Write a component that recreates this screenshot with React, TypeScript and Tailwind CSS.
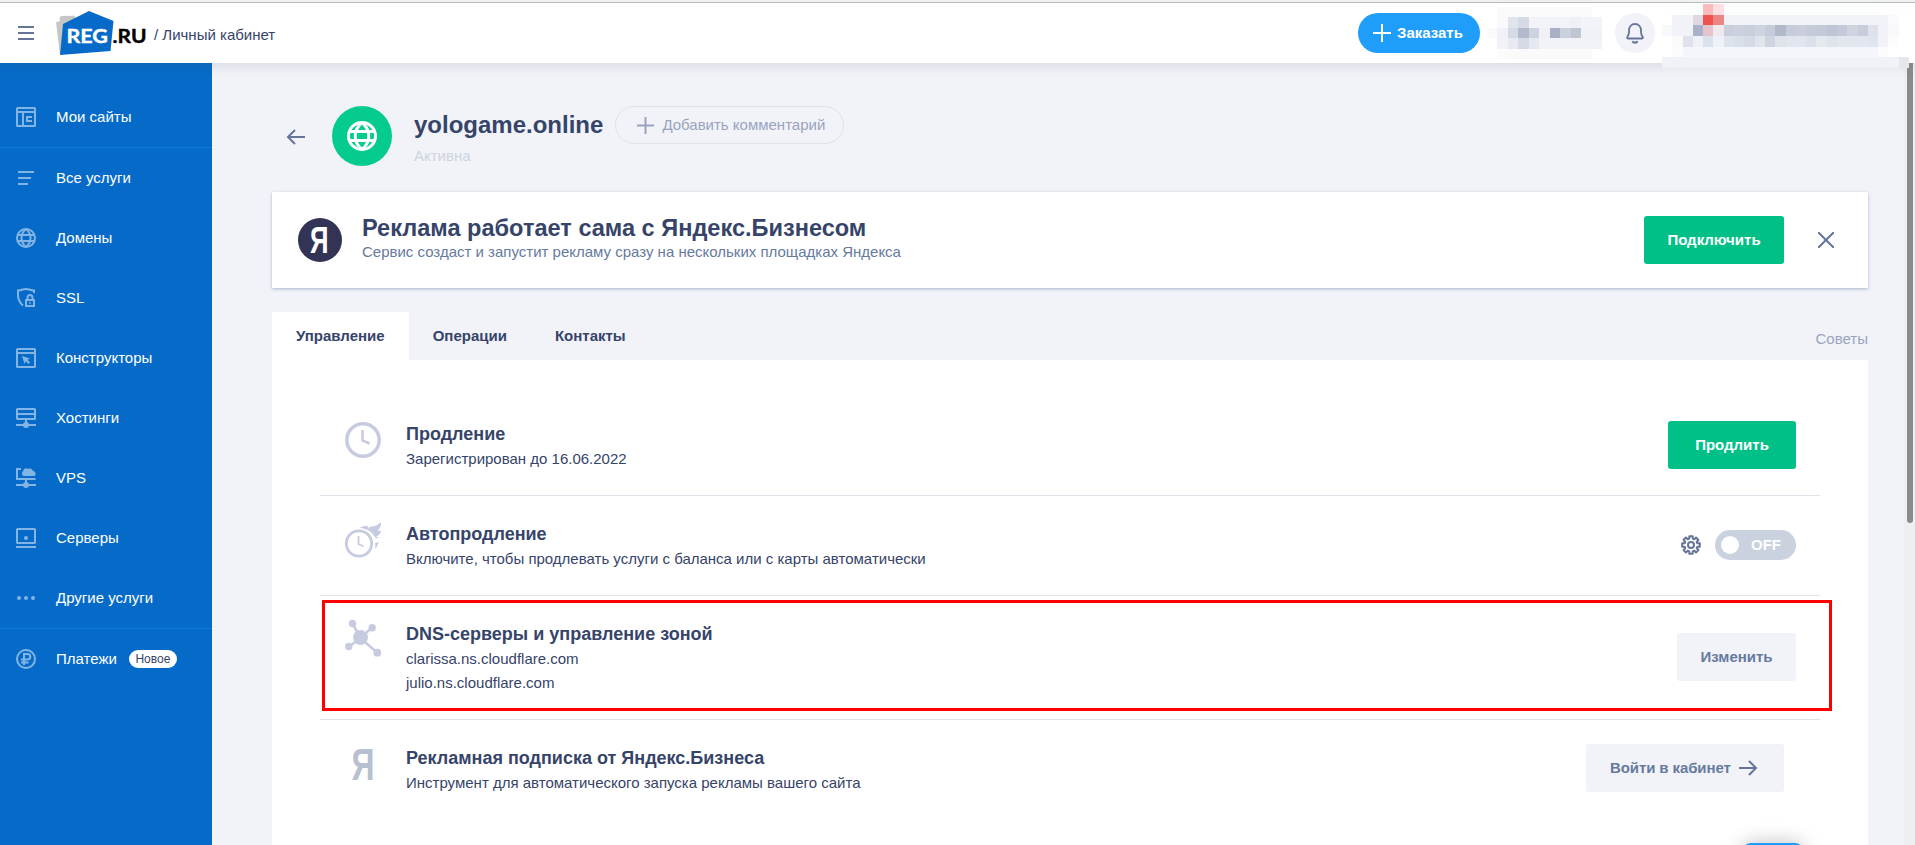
import React from "react";

type IconProps = { children: React.ReactNode };

/* 20px outline icon used by the sidebar */
function NavIcon({ children }: IconProps) {
  return (
    <svg width="20" height="20" viewBox="0 0 20 20" fill="none" stroke="currentColor" strokeWidth="2" className="shrink-0 text-[#83b5e4]">
      {children}
    </svg>
  );
}

const globe = (
  <>
    <circle cx="10" cy="10" r="9" />
    <path d="M10 1C4 6 4 14 10 19M10 1c6 5 6 13 0 18" />
    <path d="M2 7h16M2 13h16" />
  </>
);

const icons = {
  sites: (
    <>
      <rect x="1" y="1" width="18" height="18" rx="0.500" />
      <path d="M1 5h18M7 5v14M10 10h6M10 14h6M11 9v6" />
    </>
  ),
  all: <path d="M2 4h16M2 10h13M2 16h10" />,
  domains: globe,
  ssl: (
    <>
      <path d="M18 5V2.500C15 2.500 13 1 10 1S5 2.500 2 2.500V7c0 4 2 8 5 10.500" />
      <rect x="10" y="12" width="8" height="6" />
      <path d="M11.500 11V9.500a2.500 2.500 0 0 1 5 0V11" />
      <path d="M13.200 15h1.600" strokeWidth="1.600" />
    </>
  ),
  builders: (
    <>
      <rect x="1" y="1" width="18" height="18" rx="0.500" />
      <path d="M1 5h18" />
      <path d="M6 8l8 2.500-2.500 1.200L14 14.500 12.500 16l-2.700-2.700L8.500 16z" fill="currentColor" stroke="none" />
    </>
  ),
  hosting: (
    <>
      <rect x="1" y="1" width="18" height="10" rx="0.500" />
      <path d="M1 6h18M10 11v6M0 17h20" />
      <circle cx="10" cy="17" r="3" fill="currentColor" stroke="none" />
    </>
  ),
  vps: (
    <>
      <path d="M5 1H1v10h18.500M10 11v6M0 17h20" />
      <circle cx="10" cy="17" r="3" fill="currentColor" stroke="none" />
      <path d="M7.500 8a3 3 0 0 1-.3-5A3 3 0 0 1 12 1a3.200 3.200 0 0 1 5 2 2.800 2.800 0 0 1 1.500 5z" fill="currentColor" stroke="none" />
    </>
  ),
  servers: (
    <>
      <rect x="1" y="1" width="18" height="14" rx="0.500" />
      <path d="M0 19h20" />
      <circle cx="10" cy="10" r="2" fill="currentColor" stroke="none" />
    </>
  ),
  other: (
    <g fill="currentColor" stroke="none">
      <circle cx="3" cy="10" r="2" />
      <circle cx="10" cy="10" r="2" />
      <circle cx="17" cy="10" r="2" />
    </g>
  ),
  payments: (
    <>
      <circle cx="10" cy="10" r="9" />
      <path d="M8 16V5h3.500a2.700 2.700 0 0 1 0 5.500H5M5 13.500h7.500" />
    </>
  ),
};

function NavItem({ icon, label, badge }: { icon: React.ReactNode; label: string; badge?: string }) {
  return (
    <a className="flex h-[60px] items-center pl-4 text-white">
      <NavIcon>{icon}</NavIcon>
      <span className="ml-5 leading-6">{label}</span>
      {badge && (
        <span className="ml-3 flex h-[18px] w-12 items-center justify-center rounded-full bg-white text-xs text-[#364469]">{badge}</span>
      )}
    </a>
  );
}

/* Censored areas of the header: [column, row, span, colour] */
type Cell = [number, number, number, string];

const balanceCells: Cell[] = [
  [1, 0, 9, "#fafafb"],
  [1, 1, 1, "#fafafc"], [2, 1, 1, "#e0e4ed"], [3, 1, 1, "#d5dae5"], [4, 1, 4, "#f2f3f8"], [8, 1, 1, "#efeff6"], [9, 1, 2, "#f3f4f9"],
  [0, 2, 1, "#fafafa"], [1, 2, 1, "#f0f2f8"], [2, 2, 1, "#d5dae6"], [3, 2, 1, "#b3bacc"], [4, 2, 1, "#cdd3e0"], [5, 2, 1, "#f0f1f7"],
  [6, 2, 1, "#a8b0c6"], [7, 2, 1, "#cbd0dd"], [8, 2, 1, "#bec5d3"], [9, 2, 2, "#f0f2f8"],
  [1, 3, 1, "#f2f3f8"], [2, 3, 1, "#e7eaf2"], [3, 3, 1, "#d5dae5"], [4, 3, 1, "#e4e8f0"], [5, 3, 6, "#f2f3f8"],
  [1, 4, 1, "#fcfcfc"], [2, 4, 8, "#fafafb"],
];

const accountCells: Cell[] = [
  [0, 0, 24, "#fefefe"], [2, 0, 19, "#fcfdfd"], [4, 0, 1, "#f9bcbc"], [5, 0, 1, "#fcdfe0"],
  [1, 1, 21, "#f2f3f8"], [22, 1, 1, "#fafafc"], [3, 1, 1, "#dfd8e0"], [4, 1, 1, "#ef5350"], [5, 1, 1, "#ec8484"],
  [0, 2, 23, "#f8f9fb"], [1, 2, 2, "#f2f3f8"], [3, 2, 1, "#a9b2c8"], [4, 2, 1, "#e5c4cc"], [5, 2, 1, "#efe8ed"],
  [6, 2, 1, "#cacfdd"], [7, 2, 1, "#cdd1de"], [8, 2, 1, "#cacfdc"], [9, 2, 1, "#cfd5e0"], [10, 2, 1, "#c6ccd9"],
  [11, 2, 1, "#b2b9cb"], [12, 2, 1, "#c6ccd9"], [13, 2, 1, "#cacddb"], [14, 2, 1, "#c6cbda"], [15, 2, 1, "#c4c9d8"],
  [16, 2, 1, "#bec5d4"], [17, 2, 1, "#c4cad9"], [18, 2, 1, "#d0d4e0"], [19, 2, 1, "#c8ccdb"], [20, 2, 1, "#dee3eb"], [21, 2, 1, "#f2f3f8"],
  [1, 3, 1, "#fafafb"], [2, 3, 1, "#dfe2ec"], [3, 3, 1, "#f0f1f8"], [4, 3, 1, "#dbe2ec"], [5, 3, 1, "#eff1f8"], [6, 3, 1, "#dde3eb"],
  [7, 3, 1, "#dae0e9"], [8, 3, 1, "#d5dae5"], [9, 3, 1, "#e0e5ec"], [10, 3, 1, "#d0d4e0"], [11, 3, 1, "#dfe4ec"], [12, 3, 2, "#e2e5ee"],
  [14, 3, 1, "#dbe1ea"], [15, 3, 1, "#e4e8ef"], [16, 3, 1, "#dee3ec"], [17, 3, 3, "#e2e6ee"], [20, 3, 1, "#e0e4ee"], [21, 3, 1, "#f2f3f8"],
  [22, 3, 1, "#fcfcfd"],
  [1, 4, 1, "#fcfcfd"], [2, 4, 19, "#f5f6fb"], [21, 4, 1, "#fcfcfd"],
  [0, 5, 23, "#f1f2f7"], [23, 5, 1, "#e6e7eb"],
];

function Mosaic({ cells, cols, rows, className }: { cells: Cell[]; cols: number; rows: number; className: string }) {
  return (
    <svg viewBox={`0 0 ${cols} ${rows}`} preserveAspectRatio="none" shapeRendering="crispEdges" className={className}>
      {cells.map(([x, y, w, fill], i) => (
        <rect key={i} x={x} y={y} width={w} height={1} fill={fill} />
      ))}
    </svg>
  );
}

function Logo() {
  return (
    <svg width="90" height="46" viewBox="56 10 90 46" className="shrink-0">
      <path d="M56 22l3.500-.5.300-4L61 16l13-.3 2 2L66 40l-6 15z" fill="#c6c6c6" />
      <path d="M89 11l24.500 10-3 30L60 55l3-31z" fill="#066bc8" />
      <g fontFamily="Lato, 'Liberation Sans', sans-serif" fontWeight="700" fontSize="19">
        <text x="66.500" y="42.600" fill="#fff" stroke="#fff" strokeWidth="0.400" textLength="41.500" lengthAdjust="spacingAndGlyphs">REG</text>
        <text x="112.500" y="42.600" fill="#000" stroke="#000" strokeWidth="0.400" textLength="34" lengthAdjust="spacingAndGlyphs">.RU</text>
      </g>
    </svg>
  );
}

function Header() {
  return (
    <header className="relative z-20 flex h-[63px] shrink-0 flex-col bg-white shadow-[0_0_14px_rgba(54,80,100,0.220)]">
      <div className="h-[3px] shrink-0 border-b border-[#b9bdc1] bg-[#eff0f1]" />
      <div className="flex h-[60px] items-center">
        <svg width="16" height="14" viewBox="0 0 16 14" stroke="#66749a" strokeWidth="2" className="ml-[18px] shrink-0">
          <path d="M0 1h16M0 7h16M0 13h16" />
        </svg>
        <div className="ml-[22px] flex items-center">
          <Logo />
          <span className="mt-[3px] ml-2 leading-6">/ Личный кабинет</span>
        </div>
        <div className="ml-auto flex items-center">
          <button className="flex h-10 w-[122px] items-center rounded-full bg-[#1e9dfa] pl-[15px] font-bold text-white">
            <svg width="18" height="18" viewBox="0 0 18 18" stroke="#fff" strokeWidth="2"><path d="M0 9h18M9 0v18" /></svg>
            <span className="ml-[6px]">Заказать</span>
          </button>
          <Mosaic cells={balanceCells} cols={11} rows={5} className="ml-[7px] h-[52px] w-[115px]" />
          <div className="ml-[13px] flex size-10 items-center justify-center rounded-full bg-[#f2f3f9]">
            <svg width="18" height="21" viewBox="0 0 18 21" fill="none" stroke="#66749a" strokeWidth="2">
              <path d="M2 15.500h14c.9 0 1.200-.9.700-1.500-1.200-1.400-1.700-2.500-1.700-5V7.500C15 3.800 12.500 1 9 1S3 3.800 3 7.500V9c0 2.500-.5 3.600-1.700 5-.5.600-.2 1.500.7 1.500z" strokeWidth="1.800" />
              <path d="M6.500 18.200c.7 2 4.300 2 5 0" />
            </svg>
          </div>
          <div className="mr-[6px] ml-[7px] h-10 w-[247px]">
            <Mosaic cells={accountCells} cols={24} rows={6} className="mt-[-9px] h-16 w-[247px]" />
          </div>
        </div>
      </div>
    </header>
  );
}

function Sidebar() {
  return (
    <nav className="w-[212px] shrink-0 bg-[#066bc8] pt-6">
      <NavItem icon={icons.sites} label="Мои сайты" />
      <div className="border-t border-[#0c7bdc]">
        <NavItem icon={icons.all} label="Все услуги" />
        <NavItem icon={icons.domains} label="Домены" />
        <NavItem icon={icons.ssl} label="SSL" />
        <NavItem icon={icons.builders} label="Конструкторы" />
        <NavItem icon={icons.hosting} label="Хостинги" />
        <NavItem icon={icons.vps} label="VPS" />
        <NavItem icon={icons.servers} label="Серверы" />
        <NavItem icon={icons.other} label="Другие услуги" />
      </div>
      <div className="border-t border-[#0c7bdc]">
        <NavItem icon={icons.payments} label="Платежи" badge="Новое" />
      </div>
    </nav>
  );
}

function Row({ icon, title, lines, action, last }: { icon: React.ReactNode; title: string; lines: string[]; action: React.ReactNode; last?: boolean }) {
  return (
    <section className={last ? "flex pr-9 pl-6" : "flex border-b border-[#dfe2ea] pr-6 pb-6 pl-6"}>
      <div className="w-[62px] shrink-0 pt-6">{icon}</div>
      <div className="pt-[25px]">
        <h3 className="h-[26px] text-lg leading-[26px] font-bold">{title}</h3>
        {lines.map((line) => (
          <p key={line} className="h-6 leading-6">{line}</p>
        ))}
      </div>
      <div className="ml-auto h-[50px] pt-[25px]">{action}</div>
    </section>
  );
}

const clockIcon = (
  <svg width="38" height="38" viewBox="-1 -1 38 38" fill="none" stroke="#c6cbe0" strokeWidth="3.500" className="mt-px">
    <circle cx="18" cy="18" r="16.200" />
    <path d="M17.500 8v10.500l7 3" strokeWidth="2.500" />
  </svg>
);

const fastClockIcon = (
  <svg width="38" height="38" viewBox="-1 0 38 38" fill="none" stroke="#c6cbe0" strokeWidth="2.800" className="mt-px">
    <circle cx="14" cy="22.500" r="12.700" />
    <path d="M13.500 15v8l5 2.500" strokeWidth="1.800" />
    <path d="M15 7c3-2.500 6-2 8-1.500L24 8l1-2.500C30 6 33 4 36 1c.5 4-1.500 7-3.500 9 1.500 0 2.500-.3 3.500-1-.5 4-2.500 6-5 6.500l3 1.500c-2 .5-3.500 0-4.500-1.500C27 11 22 7.500 15 7zM30 22l4-1-3.500 7z" fill="#c6cbe0" stroke="none" />
  </svg>
);

const nodesIcon = (
  <svg width="38" height="38" viewBox="-1 -1 38 38" fill="#c6cbe0" className="-mt-px">
    <path d="M7.500 3.500l8 14.500L27 7.500M15.500 18L3.500 27M15.500 18l17 15" fill="none" stroke="#c6cbe0" strokeWidth="2.600" />
    <circle cx="15.500" cy="17.500" r="7.500" />
    <circle cx="7.500" cy="3.500" r="3.700" />
    <circle cx="27.200" cy="7.800" r="3.700" />
    <circle cx="3.700" cy="26.500" r="3.700" />
    <circle cx="32.300" cy="32.700" r="3.900" />
  </svg>
);

const yandexIcon = (
  <svg width="38" height="50" viewBox="0 -6 38 50" className="-mt-[5px]">
    <text x="7.500" y="34.500" fontFamily="Liberation Sans" fontWeight="700" fontSize="44" textLength="23" lengthAdjust="spacingAndGlyphs" fill="#b7c0d0">Я</text>
  </svg>
);

function gearPath() {
  const points: string[] = [];
  for (let i = 0; i < 8; i++) {
    [[-15, 6.600], [-11, 9], [11, 9], [15, 6.600]].forEach(([offset, r]) => {
      const a = ((i * 45 + offset) * Math.PI) / 180;
      points.push(`${(10 + r * Math.cos(a)).toFixed(2)} ${(10 + r * Math.sin(a)).toFixed(2)}`);
    });
  }
  return `M${points.join("L")}Z`;
}

export default function App() {
  return (
    <div className="relative flex h-[845px] w-full flex-col overflow-hidden bg-[#f2f3f9] font-['Liberation_Sans',Arial,sans-serif] text-[15px] text-[#364469]">
      <Header />
      <div className="flex min-h-0 flex-1">
        <Sidebar />
        <main className="min-w-0 flex-1 pr-9 pl-[60px]">
          <div className="flex h-[129px] pt-[43px] pl-[14px]">
            <svg width="20" height="16" viewBox="0 0 20 16" fill="none" stroke="#66749a" strokeWidth="2" className="mt-[23px] shrink-0">
              <path d="M19 8H2M9 1L2 8l7 7" />
            </svg>
            <div className="ml-[26px] flex size-[60px] shrink-0 items-center justify-center rounded-full bg-[#06cb8e]">
              <svg width="30" height="30" viewBox="0 0 20 20" fill="none" stroke="#fff" strokeWidth="2">{globe}</svg>
            </div>
            <div className="ml-[22px]">
              <div className="flex h-[38px] items-center">
                <h1 className="text-2xl font-bold">yologame.online</h1>
                <button className="ml-3 flex h-[38px] w-[229px] items-center rounded-full border border-[#dfe2ea] pl-[21px] text-[#98a4bd]">
                  <svg width="17" height="17" viewBox="0 0 17 17" stroke="#98a4bd" strokeWidth="2"><path d="M0 8.500h17M8.500 0v17" /></svg>
                  <span className="ml-2">Добавить комментарий</span>
                </button>
              </div>
              <p className="leading-6 text-[#cdd4e0]">Активна</p>
            </div>
          </div>

          <section className="flex h-24 items-center bg-white pr-[34px] pl-[26px] shadow-[0_1px_3px_rgba(80,105,150,0.450)]">
            <svg width="44" height="44" viewBox="0 0 44 44" className="shrink-0">
              <circle cx="22" cy="22" r="22" fill="#333355" />
              <text x="12" y="34.500" fontFamily="Liberation Sans" fontWeight="700" fontSize="36" textLength="18.500" lengthAdjust="spacingAndGlyphs" fill="#fff">Я</text>
            </svg>
            <div className="ml-5">
              <h2 className="h-6 text-[23.55px] leading-6 font-bold">Реклама работает сама с Яндекс.Бизнесом</h2>
              <p className="h-6 leading-6 text-[#667a9e]">Сервис создаст и запустит рекламу сразу на нескольких площадках Яндекса</p>
            </div>
            <button className="ml-auto h-12 w-[140px] rounded-[3px] bg-[#00c087] font-bold text-white">Подключить</button>
            <svg width="16" height="16" viewBox="0 0 16 16" stroke="#66749a" strokeWidth="2" className="ml-[34px]">
              <path d="M0 0l16 16M16 0L0 16" />
            </svg>
          </section>

          <div className="mt-6 flex h-12 items-center font-bold">
            <div className="flex h-12 items-center bg-white px-6">Управление</div>
            <div className="px-6">Операции</div>
            <div className="px-6">Контакты</div>
            <div className="mt-[6px] ml-auto font-normal text-[#98a4bd]">Советы</div>
          </div>

          <div className="h-[520px] bg-white px-12 pt-9">
            <Row
              icon={clockIcon}
              title="Продление"
              lines={["Зарегистрирован до 16.06.2022"]}
              action={<button className="h-12 w-32 rounded-[3px] bg-[#00c087] font-bold text-white">Продлить</button>}
            />
            <Row
              icon={fastClockIcon}
              title="Автопродление"
              lines={["Включите, чтобы продлевать услуги с баланса или с карты автоматически"]}
              action={
                <div className="flex h-12 items-center">
                  <svg width="20" height="20" viewBox="0 0 20 20" fill="none" stroke="#66749a" strokeWidth="2">
                    <path d={gearPath()} strokeLinejoin="round" />
                    <circle cx="10" cy="10" r="3" />
                  </svg>
                  <div className="ml-[14px] flex h-[30px] w-[81px] items-center rounded-full bg-[#cad2df] pl-[6px] font-bold text-white">
                    <span className="size-[18px] rounded-full bg-white" />
                    <span className="ml-3">OFF</span>
                  </div>
                </div>
              }
            />
            <div className="relative">
              <Row
                icon={nodesIcon}
                title="DNS-серверы и управление зоной"
                lines={["clarissa.ns.cloudflare.com", "julio.ns.cloudflare.com"]}
                action={<button className="mt-3 h-12 w-[119px] rounded-[3px] bg-[#f2f3f9] font-bold text-[#667a9e]">Изменить</button>}
              />
              <div className="absolute top-1 -right-3 left-0.5 h-[111px] border-[3px] border-[#ff0000]" />
            </div>
            <Row
              last
              icon={yandexIcon}
              title="Рекламная подписка от Яндекс.Бизнеса"
              lines={["Инструмент для автоматического запуска рекламы вашего сайта"]}
              action={
                <button className="-mt-px flex h-12 w-[198px] items-center rounded-[3px] bg-[#f2f3f9] pl-6 font-bold text-[#667a9e]">
                  <span className="w-[120px] whitespace-nowrap tracking-[-0.1px]">Войти в кабинет</span>
                  <svg width="19" height="16" viewBox="0 0 19 16" fill="none" stroke="#66749a" strokeWidth="2" className="ml-[9px]">
                    <path d="M0 8h17M10 1l7 7-7 7" />
                  </svg>
                </button>
              }
            />
          </div>
        </main>
        <div className="flex w-[11px] shrink-0 justify-center bg-[#eeeff1]">
          <div className="h-[460px] w-[6px] rounded-b-full bg-[#8a8b8d]" />
        </div>
      </div>
      <div className="absolute top-[843px] left-[1743px] size-[60px] rounded-lg bg-[#1e9dfa] shadow-[0_0_20px_rgba(0,0,0,0.250)]" />
    </div>
  );
}
